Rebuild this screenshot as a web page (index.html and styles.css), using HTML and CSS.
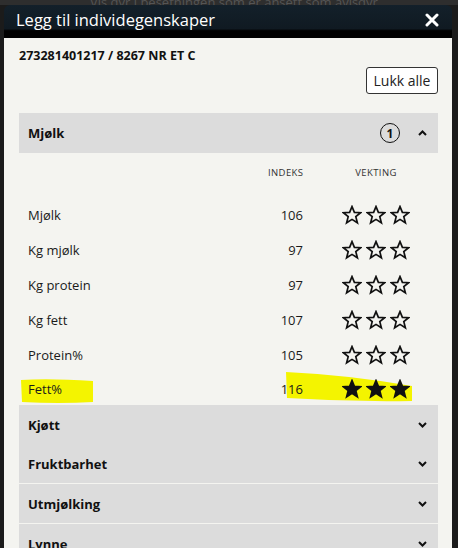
FILE: index.html
```html
<!DOCTYPE html>
<html lang="no">
<head>
  <meta charset="UTF-8" />
  <title>Legg til individegenskaper</title>
  <link rel="stylesheet" href="styles.css">
</head>
<body>
  <div class="backdrop">Vis dyr i besetningen som er ansett som avlsdyr</div>

  <div class="modal">
    <!-- Topp -->
    <div class="modal-head">
      <span class="modal-title">Legg til individegenskaper</span>
      <svg class="close" width="14" height="14" viewBox="0 0 14 14">
        <path d="M2 2 L12 12 M12 2 L2 12" stroke="#fff" stroke-width="3" stroke-linecap="round" />
      </svg>
    </div>

    <div class="modal-body">
      <div class="animal-id">273281401217 / 8267 NR ET C</div>
      <div class="actions">
        <button class="btn-close-all">Lukk alle</button>
      </div>

      <!-- Mjølk, åpen -->
      <div class="acc-head">
        <span>Mjølk</span>
        <span class="badge">1</span>
        <svg class="chev" width="9" height="6" viewBox="0 0 9 6">
          <path d="M1 5 L4.5 1.5 L8 5" fill="none" stroke="#111" stroke-width="2" />
        </svg>
      </div>
      <div class="acc-panel">
        <div class="row row-head">
          <span></span>
          <span class="idx">INDEKS</span>
          <span class="weight">VEKTING</span>
        </div>
        <div class="row">
          <span>Mjølk</span><span class="idx">106</span>
          <span class="stars"><svg><use href="#star" /></svg><svg><use href="#star" /></svg><svg><use href="#star" /></svg></span>
        </div>
        <div class="row">
          <span>Kg mjølk</span><span class="idx">97</span>
          <span class="stars"><svg><use href="#star" /></svg><svg><use href="#star" /></svg><svg><use href="#star" /></svg></span>
        </div>
        <div class="row">
          <span>Kg protein</span><span class="idx">97</span>
          <span class="stars"><svg><use href="#star" /></svg><svg><use href="#star" /></svg><svg><use href="#star" /></svg></span>
        </div>
        <div class="row">
          <span>Kg fett</span><span class="idx">107</span>
          <span class="stars"><svg><use href="#star" /></svg><svg><use href="#star" /></svg><svg><use href="#star" /></svg></span>
        </div>
        <div class="row">
          <span>Protein%</span><span class="idx">105</span>
          <span class="stars"><svg><use href="#star" /></svg><svg><use href="#star" /></svg><svg><use href="#star" /></svg></span>
        </div>
        <div class="row row-last">
          <svg class="marker" width="420" height="34" viewBox="0 0 420 34">
            <path d="M2 9 Q30 7 74 10 L74 31 Q40 33 3 31 Z" fill="#f4f400" />
            <path d="M267 1 Q330 4 393 15 L393 30 Q330 31 268 27 Z" fill="#f4f400" />
          </svg>
          <span>Fett%</span><span class="idx">116</span>
          <span class="stars filled"><svg><use href="#star" /></svg><svg><use href="#star" /></svg><svg><use href="#star" /></svg></span>
        </div>
      </div>

      <div class="acc-head acc-closed">
        <span>Kjøtt</span>
        <svg class="chev" width="9" height="6" viewBox="0 0 9 6"><path d="M1 1 L4.5 4.5 L8 1" fill="none" stroke="#111" stroke-width="2" /></svg>
      </div>
      <div class="acc-head acc-closed">
        <span>Fruktbarhet</span>
        <svg class="chev" width="9" height="6" viewBox="0 0 9 6"><path d="M1 1 L4.5 4.5 L8 1" fill="none" stroke="#111" stroke-width="2" /></svg>
      </div>
      <div class="acc-head acc-closed acc-sep">
        <span>Utmjølking</span>
        <svg class="chev" width="9" height="6" viewBox="0 0 9 6"><path d="M1 1 L4.5 4.5 L8 1" fill="none" stroke="#111" stroke-width="2" /></svg>
      </div>
      <div class="acc-head acc-closed acc-sep">
        <span>Lynne</span>
        <svg class="chev" width="9" height="6" viewBox="0 0 9 6"><path d="M1 1 L4.5 4.5 L8 1" fill="none" stroke="#111" stroke-width="2" /></svg>
      </div>
    </div>
  </div>

  <!-- Stjerne -->
  <svg width="0" height="0" style="position:absolute">
    <symbol id="star" viewBox="0 0 20 20">
      <path d="M10 1.6 L12.4 7.4 L18.6 7.7 L13.8 11.6 L15.4 17.8 L10 14.4 L4.6 17.8 L6.2 11.6 L1.4 7.7 L7.6 7.4 Z" stroke="#111" stroke-width="1.7" stroke-linejoin="miter" />
    </symbol>
  </svg>
</body>
</html>
```

FILE: styles.css
```css
/* Grunnstil */
body {
  margin: 0;
  background: #1b1b1b;
  font-family: "Open Sans", "DejaVu Sans", sans-serif;
  color: #111;
  overflow: hidden;
}

.backdrop {
  height: 5px;
  overflow: hidden;
  background: #2e2e2e;
  color: #555;
  font-size: 13px;
  line-height: 4px;
  padding-left: 90px;
}

.modal {
  margin: 0 6px 0 4px;
}

.modal-head {
  height: 33px;
  border-radius: 6px 6px 0 0;
  background: linear-gradient(#13202a 0, #101a22 72%, #000 78%, #000 100%);
  display: flex;
  align-items: center;
  padding: 0 13px 4px 12px;
  box-sizing: border-box;
}

.modal-title {
  flex: 1;
  color: #fff;
  font-size: 16.5px;
}

.close {
  display: block;
}

.modal-body {
  background: #f4f4f0;
  padding: 9px 14px 0 15px;
  height: 510px;
}

.animal-id {
  font-weight: bold;
  font-size: 12.5px;
  line-height: 18px;
}

.actions {
  display: flex;
  justify-content: flex-end;
  margin-top: 2px;
  margin-bottom: 19px;
}

.btn-close-all {
  font-family: inherit;
  font-size: 14px;
  color: #222;
  background: #fff;
  border: 1px solid #333;
  border-radius: 3px;
  width: 72px;
  height: 27px;
  padding: 0;
}

.acc-head {
  background: #dcdcdc;
  height: 40px;
  display: flex;
  align-items: center;
  gap: 14px;
  padding: 0 11px 0 9px;
  font-weight: bold;
  font-size: 13px;
}

.acc-head > span:first-child {
  flex: 1;
}

.acc-closed {
  height: 39px;
}

.acc-sep {
  border-top: 1px solid #f4f4f0;
}

.badge {
  width: 18px;
  height: 18px;
  border: 1.5px solid #111;
  border-radius: 50%;
  display: flex;
  align-items: center;
  justify-content: center;
  font-size: 12px;
  margin-right: 4px;
}

.chev {
  display: block;
}

.row {
  display: grid;
  grid-template-columns: 1fr 60px 135px;
  align-items: center;
  height: 35px;
  padding-left: 9px;
  font-size: 13px;
  color: #1a1a1a;
  position: relative;
}

.row-head {
  height: 44px;
  align-items: start;
  padding-top: 12px;
  box-sizing: border-box;
  font-size: 9.5px;
  letter-spacing: 0.4px;
  color: #333;
  line-height: 16px;
}

.row-last {
  height: 33px;
}

.row > span {
  position: relative;
}

.idx {
  text-align: right;
}

.row-head .idx {
  margin-right: -0.4px;
}

.weight {
  padding-left: 39px;
  width: 68px;
  text-align: center;
}

.stars {
  display: flex;
  gap: 4px;
  padding-left: 39px;
}

.stars svg {
  width: 20px;
  height: 20px;
  fill: none;
}

.stars.filled svg {
  fill: #111;
}

.marker {
  position: absolute;
  left: 0;
  top: -1px;
}
```
